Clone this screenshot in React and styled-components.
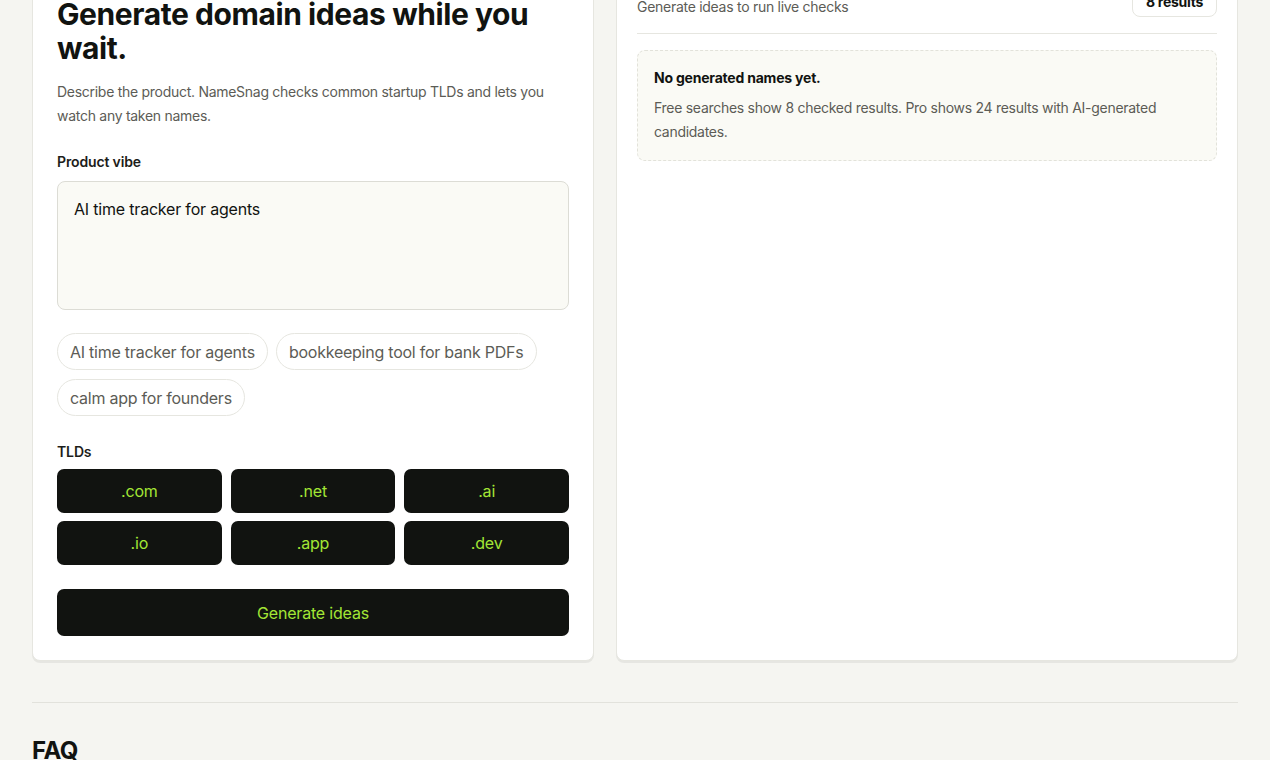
import React, { useState } from 'react';
import styled, { createGlobalStyle } from 'styled-components';

const GlobalStyle = createGlobalStyle`
  * { box-sizing: border-box; }
  html, body {
    margin: 0;
    padding: 0;
    background: #f5f5f1;
    font-family: Inter, "Noto Sans", "Liberation Sans", sans-serif;
    color: #111310;
    -webkit-font-smoothing: antialiased;
  }
`;

const Page = styled.div`
  width: 1206px;
  margin: -49px auto 0;
`;

const Workspace = styled.div`
  display: grid;
  grid-template-columns: 562px 1fr;
  gap: 22px;
  align-items: stretch;
`;

const Card = styled.section`
  background: #ffffff;
  border: 1px solid #e6e6e0;
  border-radius: 8px;
  box-shadow: 0 2px 0 rgba(0, 0, 0, 0.06);
  padding: ${p => p.$pad || '24px'};
`;

const Eyebrow = styled.div`
  font-size: 12px;
  line-height: 16px;
  font-weight: 600;
  letter-spacing: 0.08em;
  text-transform: uppercase;
  color: #6b6b63;
  margin-bottom: 5px;
`;

const Heading = styled.h1`
  margin: 0;
  font-size: 30px;
  line-height: 34px;
  font-weight: 700;
  letter-spacing: -0.014em;
  color: #111310;
`;

const Lead = styled.p`
  margin: 15px 0 0;
  font-size: 14px;
  line-height: 24px;
  letter-spacing: -0.02em;
  color: #5c5c56;
`;

const Label = styled.div`
  margin: ${p => p.$top || '25px'} 0 ${p => p.$bottom || '10px'};
  font-size: 14px;
  line-height: 18px;
  font-weight: 600;
  letter-spacing: -0.01em;
  color: #1d1d1a;
`;

const Vibe = styled.textarea`
  display: block;
  width: 100%;
  height: 129px;
  resize: none;
  padding: 16px;
  background: #fafaf5;
  border: 1px solid #dcdcd5;
  border-radius: 8px;
  font-family: inherit;
  font-size: 16px;
  line-height: 22px;
  letter-spacing: -0.012em;
  color: #111310;
  outline: none;
`;

const Chips = styled.div`
  display: flex;
  flex-wrap: wrap;
  gap: 9px 8px;
  margin-top: 23px;
`;

const Chip = styled.button`
  height: 37px;
  padding: 0 12px;
  border: 1px solid #e6e6e0;
  border-radius: 999px;
  background: #ffffff;
  font-family: inherit;
  font-size: 16px;
  letter-spacing: -0.015em;
  color: #5c5c56;
  cursor: pointer;
`;

const TldGrid = styled.div`
  display: grid;
  grid-template-columns: repeat(3, 1fr);
  gap: 8px 9px;
`;

const DarkButton = styled.button`
  height: ${p => p.$tall ? '47px' : '44px'};
  width: 100%;
  border: none;
  border-radius: 7px;
  background: #111310;
  color: #a3e635;
  font-family: inherit;
  font-size: 16px;
  letter-spacing: -0.012em;
  cursor: pointer;
  margin-top: ${p => p.$tall ? '24px' : '0'};
`;

const ResultsHeader = styled.div`
  display: flex;
  justify-content: space-between;
  align-items: flex-end;
  padding-bottom: 16px;
  border-bottom: 1px solid #e6e6e0;
`;

const ResultsTitle = styled.h2`
  margin: 0 0 1px;
  font-size: 18px;
  line-height: 24px;
  font-weight: 700;
`;

const Muted = styled.div`
  font-size: 14px;
  line-height: 20px;
  letter-spacing: -0.02em;
  color: #5c5c56;
`;

const Badge = styled.div`
  height: 32px;
  padding: 0 13px;
  display: flex;
  align-items: center;
  border: 1px solid #e6e6e0;
  border-radius: 8px;
  font-size: 14px;
  font-weight: 700;
  letter-spacing: -0.02em;
  color: #111310;
`;

const Empty = styled.div`
  margin-top: 16px;
  padding: 17px 16px 16px;
  background: #fafaf5;
  border: 1px dashed #e2e2da;
  border-radius: 8px;
`;

const EmptyTitle = styled.div`
  font-size: 14px;
  line-height: 20px;
  font-weight: 700;
  letter-spacing: -0.015em;
  margin-bottom: 8px;
`;

const EmptyText = styled.div`
  font-size: 14px;
  line-height: 24px;
  letter-spacing: -0.02em;
  color: #5c5c56;
`;

const Faq = styled.section`
  margin-top: 41px;
  border-top: 1px solid #e2e2dc;
  padding-top: 33px;
`;

const FaqTitle = styled.h2`
  margin: 0;
  font-size: 24px;
  line-height: 30px;
  font-weight: 700;
  letter-spacing: -0.02em;
`;

const examples = [
  'AI time tracker for agents',
  'bookkeeping tool for bank PDFs',
  'calm app for founders',
];

const tlds = ['.com', '.net', '.ai', '.io', '.app', '.dev'];

export default function App() {
  const [vibe, setVibe] = useState('AI time tracker for agents');

  return (
    <>
      <GlobalStyle />
      <Page>
        <Workspace>
          <Card>
            <Eyebrow>Domain generator</Eyebrow>
            <Heading>Generate domain ideas while you wait.</Heading>
            <Lead>
              Describe the product. NameSnag checks common startup TLDs and lets you
              watch any taken names.
            </Lead>

            <Label>Product vibe</Label>
            <Vibe value={vibe} onChange={e => setVibe(e.target.value)} />

            <Chips>
              {examples.map(ex => (
                <Chip key={ex} onClick={() => setVibe(ex)}>{ex}</Chip>
              ))}
            </Chips>

            <Label $top="27px" $bottom="8px">TLDs</Label>
            <TldGrid>
              {tlds.map(t => <DarkButton key={t}>{t}</DarkButton>)}
            </TldGrid>

            <DarkButton $tall>Generate ideas</DarkButton>
          </Card>

          <Card $pad="20px">
            <ResultsHeader>
              <div>
                <ResultsTitle>Results</ResultsTitle>
                <Muted>Generate ideas to run live checks</Muted>
              </div>
              <Badge>8 results</Badge>
            </ResultsHeader>
            <Empty>
              <EmptyTitle>No generated names yet.</EmptyTitle>
              <EmptyText>
                Free searches show 8 checked results. Pro shows 24 results with AI-generated
                candidates.
              </EmptyText>
            </Empty>
          </Card>
        </Workspace>

        <Faq>
          <FaqTitle>FAQ</FaqTitle>
        </Faq>
      </Page>
    </>
  );
}
